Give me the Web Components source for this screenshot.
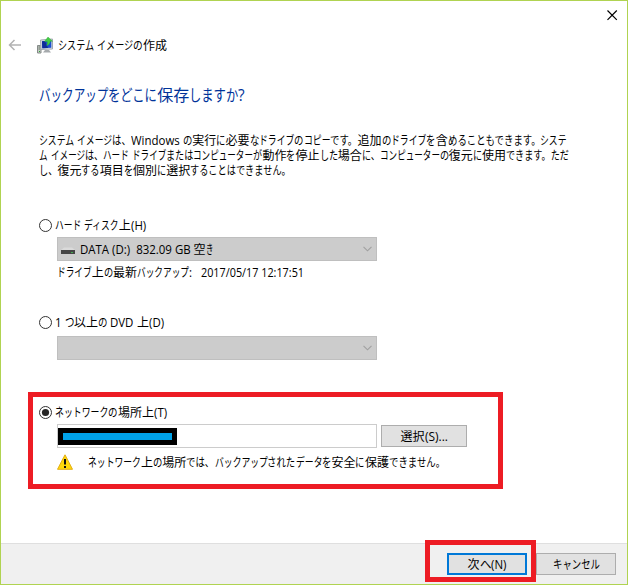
<!DOCTYPE html>
<html lang="ja">
<head>
<meta charset="utf-8">
<title>システム イメージの作成</title>
<style>
html,body{margin:0;height:100%;overflow:hidden;background:#fff}
</style>
</head>
<body>
<backup-wizard></backup-wizard>
<script>
/* One line of UI text: kana are set narrower than kanji so that the line fills `w` pixels. */
class UiText extends HTMLElement {
  connectedCallback() {
    const root = this.attachShadow({ mode: 'open' });
    root.innerHTML = `<style>
      :host{display:block;white-space:pre;height:var(--lh,15px);line-height:var(--lh,15px);flex:none}
      .line{display:flex;height:100%}
      span{display:block;white-space:pre;flex:none;transform-origin:0 50%}
    </style><div class="line"></div>`;
    const line = root.querySelector('.line');
    const w = +this.getAttribute('w');
    this.style.width = w + 'px';
    const text = this.getAttribute('text');
    const hasKana = /[ァ-ヶーぁ-ん]/.test(text);
    const runs = text.match(/[ァ-ヶー]+|[ぁ-ん、。]+|[\u0020-\u007e]+|[^ァ-ヶーぁ-ん、。\u0020-\u007e]+/g);
    const items = runs.map(t => {
      const el = document.createElement('span');
      el.textContent = t;
      line.append(el);
      const c = t[0];
      const latin = /[\u0020-\u007e]/.test(c);
      const f = /[ァ-ヶー]/.test(c) ? 0.94 : /[ぁ-ん、。]/.test(c) ? 1 : latin && !hasKana ? 1 : 0;
      return { el, f, base: latin ? 0.955 : 1, n: el.getBoundingClientRect().width };
    });
    const fixed = items.filter(i => !i.f).reduce((a, i) => a + i.n * i.base, 0);
    const flex = items.reduce((a, i) => a + i.n * i.f, 0);
    const k = flex ? (w - fixed) / flex : 1;
    for (const i of items) {
      const s = i.f ? k * i.f : i.base;
      i.el.style.width = i.n * s + 'px';
      if (s !== 1) i.el.style.transform = `scaleX(${s})`;
    }
  }
}

class RadioMark extends HTMLElement {
  connectedCallback() {
    this.attachShadow({ mode: 'open' }).innerHTML = `<style>:host{display:block;width:13px;height:13px;flex:none}svg{display:block}</style>
    <svg width="13" height="13"><circle cx="6.5" cy="6.5" r="6" fill="#fff" stroke="#333"/>${this.hasAttribute('checked') ? '<circle cx="6.5" cy="6.5" r="3.6" fill="#262626"/>' : ''}</svg>`;
  }
}

class RadioRow extends HTMLElement {
  connectedCallback() {
    this.attachShadow({ mode: 'open' }).innerHTML = `<style>:host{display:flex;align-items:center;gap:3px;height:15px;padding-left:39px}</style>
    <radio-mark ${this.hasAttribute('checked') ? 'checked' : ''}></radio-mark><slot></slot>`;
  }
}

class ComboBox extends HTMLElement {
  connectedCallback() {
    this.attachShadow({ mode: 'open' }).innerHTML = `<style>
      :host{display:flex;align-items:center;box-sizing:border-box;width:320px;height:24px;margin-left:57px;border:1px solid #bfbfbf;background:#ccc}
      .content{flex:1;display:flex;align-items:center;gap:5px;padding-left:3px}
      .arrow{margin-right:4px}
    </style><div class="content"><slot></slot></div>
    <svg class="arrow" width="9" height="6"><path d="M.5 .8 4.5 4.8 8.5 .8" fill="none" stroke="#a0a0a0" stroke-width="1.1"/></svg>`;
  }
}

class PushButton extends HTMLElement {
  connectedCallback() {
    this.attachShadow({ mode: 'open' }).innerHTML = `<style>
      :host{display:flex;align-items:center;justify-content:center;box-sizing:border-box;height:22px;width:80px;border:1px solid #adadad;background:#e1e1e1;flex:none}
      :host([wide]){width:86px}
      :host([primary]){border:2px solid #0078d7}
    </style><slot></slot>`;
  }
}

class HighlightFrame extends HTMLElement {
  connectedCallback() {
    this.attachShadow({ mode: 'open' }).innerHTML = `<style>:host{position:absolute;box-sizing:border-box;border:5px solid #ed1c24;pointer-events:none}</style>`;
  }
}

class BackupWizard extends HTMLElement {
  connectedCallback() {
    this.attachShadow({ mode: 'open' }).innerHTML = `<style>
      :host{position:relative;display:flex;flex-direction:column;box-sizing:border-box;width:628px;height:585px;border:1px solid #b0d351;background:#fff;
        font:12px "Open Sans","Noto Sans CJK JP",sans-serif;color:#000}
      .page{margin:-1px 0 0 -1px;width:628px;height:543px;display:flex;flex-direction:column;flex:none}
      .close{height:30px;display:flex;justify-content:flex-end;padding:10px 10px 0 0;box-sizing:border-box}
      .title{height:30px;display:flex;align-items:center;padding-left:8px}
      .title .back{margin-right:15px}
      .title .app{margin-right:5px}
      h1{margin:23px 0 0 39px;font-size:16px;font-weight:400;color:#003399;--lh:24px}
      .intro{margin:26px 0 0 39px}
      .hard{margin-top:40px}
      .gap{margin-top:4px}
      .status{display:flex;gap:9px;margin:4px 0 0 57px}
      .dvd{margin-top:35px}
      .dvdbox{margin-top:6px}
      .net{margin-top:45px}
      .path{display:flex;align-items:center;gap:4px;margin:4px 0 0 57px}
      .input{box-sizing:border-box;width:320px;height:24px;border:1px solid #ccc;padding:3px 0 0 0;background:#fff}
      .mask{box-sizing:border-box;width:119px;height:17px;border:5px solid #000;background:#00a2e8}
      .warn{display:flex;align-items:center;margin:6px 0 0 57px;gap:15px}
      footer{box-sizing:border-box;width:626px;height:41px;flex:none;border-top:1px solid #dfdfdf;background:#f0f0f0;display:flex;justify-content:flex-end;gap:9px;padding:9px 11px 0 0}
      svg{display:block;flex:none}
    </style>
    <div class="page">
      <div class="close"><svg width="11" height="11"><path d="M.5.5 9.8 9.8M9.8.5.5 9.8" stroke="#000" stroke-width="1.2"/></svg></div>
      <div class="title">
        <svg class="back" width="14" height="12"><path d="M13 6H1.6M6.5 1 1.5 6 6.5 11" fill="none" stroke="#b2b2b2" stroke-width="1.5"/></svg>
        <svg class="app" width="16" height="17" viewBox="0 0 16 17">
          <path d="M.5 8.5H4V16H.5z" fill="#c5c9c5" stroke="#858b88"/><path d="M1.5 10H3M1.5 12H3" stroke="#627063"/><path d="M2 14h1v1H2z" fill="#2bab36"/>
          <path d="M3.5 3 15.5 2V12L4 12.5z" fill="#d6dce0" stroke="#a3a9b2"/>
          <path d="M5 4.2 14.3 3.5V10.8L5.3 11.2z" fill="#1c4fd0"/><path d="M5 4.2 8 4 11 11 5.3 11.2z" fill="#102b9a"/>
          <path d="M8 13h4l2 2.5H6z" fill="#a6aaad"/>
          <path d="M11 0 15.5 4.2H13.2Q13.2 7.6 9.6 8.6 10.8 6.3 10.2 4.5H7.5z" fill="#43cd43" stroke="#2ba534" stroke-width=".4"/>
        </svg>
        <ui-text w="109" text="システム イメージの作成"></ui-text>
      </div>
      <h1><ui-text w="206" text="バックアップをどこに保存しますか?"></ui-text></h1>
      <div class="intro">
        <ui-text w="528" text="システム イメージは、Windows の実行に必要なドライブのコピーです。追加のドライブを含めることもできます。システ"></ui-text>
        <ui-text w="530" text="ム イメージは、ハード ドライブまたはコンピューターが動作を停止した場合に、コンピューターの復元に使用できます。ただ"></ui-text>
        <ui-text w="252" text="し、復元する項目を個別に選択することはできません。"></ui-text>
      </div>
      <radio-row class="hard"><ui-text w="91" text="ハード ディスク上(H)"></ui-text></radio-row>
      <combo-box class="gap">
        <svg width="14" height="8" style="margin-top:3px"><path d="M3 .5h8L14 3H0z" fill="#dadada"/><path d="M0 3h14v4H0z" fill="#454545"/><path d="M10 5h2v1h-2z" fill="#42a84e"/></svg>
        <ui-text w="133" text="DATA (D:)  832.09 GB 空き"></ui-text>
      </combo-box>
      <div class="status"><ui-text w="135" text="ドライブ上の最新バックアップ:"></ui-text><ui-text w="103" text="2017/05/17 12:17:51"></ui-text></div>
      <radio-row class="dvd"><ui-text w="109" text="1 つ以上の DVD 上(D)"></ui-text></radio-row>
      <combo-box class="dvdbox"></combo-box>
      <radio-row class="net" checked><ui-text w="112" text="ネットワークの場所上(T)"></ui-text></radio-row>
      <div class="path"><div class="input"><div class="mask"></div></div><push-button wide><ui-text w="47" text="選択(S)..."></ui-text></push-button></div>
      <div class="warn">
        <svg width="16" height="16"><path d="M8 .8 15.5 15.3H.5z" fill="#ffd90a" stroke="#e3ae16" stroke-linejoin="round"/><path d="M8 5v5.5M8 12v2" stroke="#111" stroke-width="2"/></svg>
        <ui-text w="357" text="ネットワーク上の場所では、バックアップされたデータを安全に保護できません。"></ui-text>
      </div>
    </div>
    <footer>
      <push-button primary><ui-text w="39" text="次へ(N)"></ui-text></push-button>
      <push-button><ui-text w="47" text="キャンセル"></ui-text></push-button>
    </footer>
    <highlight-frame style="left:27px;top:391px;width:475px;height:97px"></highlight-frame>
    <highlight-frame style="left:424px;top:539px;width:111px;height:42px"></highlight-frame>`;
  }
}
customElements.define('ui-text', UiText);
customElements.define('radio-mark', RadioMark);
customElements.define('radio-row', RadioRow);
customElements.define('combo-box', ComboBox);
customElements.define('push-button', PushButton);
customElements.define('highlight-frame', HighlightFrame);
customElements.define('backup-wizard', BackupWizard);
</script>
</body>
</html>
